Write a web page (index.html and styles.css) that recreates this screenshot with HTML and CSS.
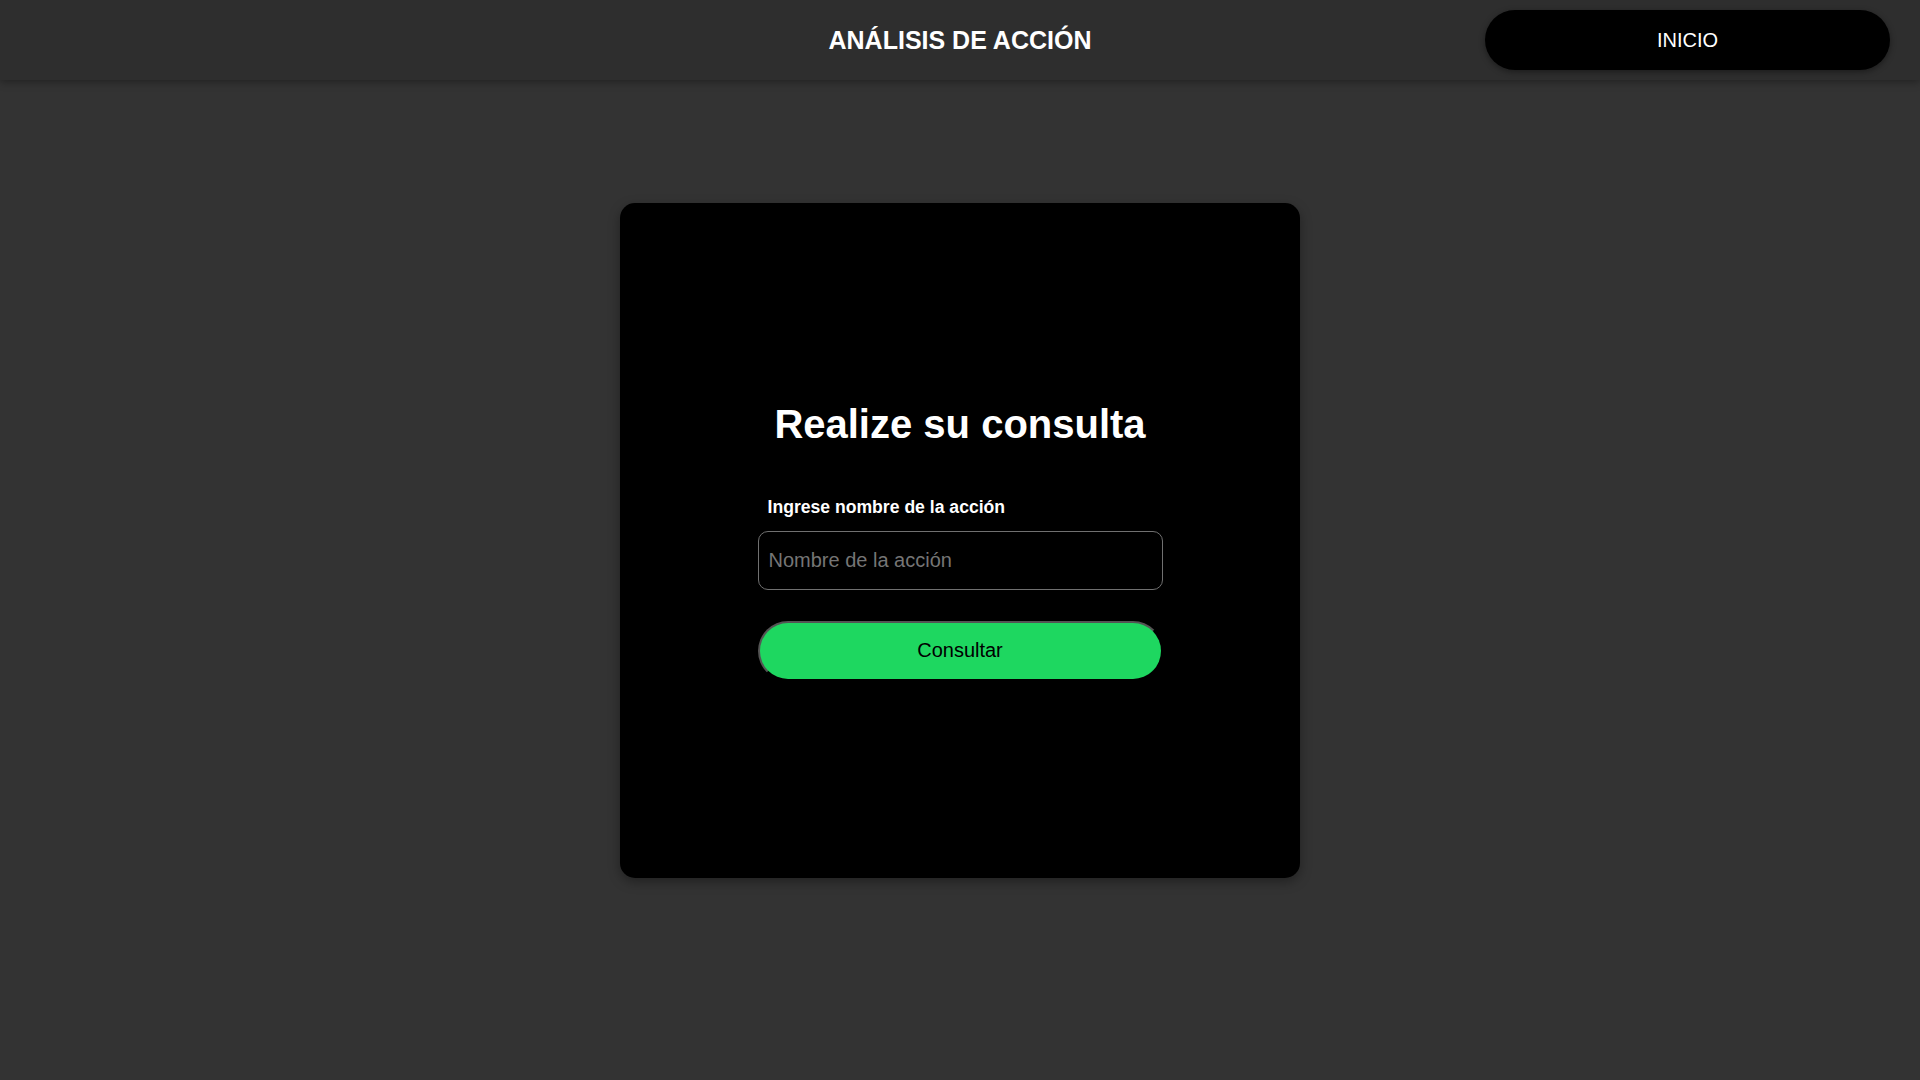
FILE: index.html
```html
<!DOCTYPE html>
<html lang="es">
<head>
<meta charset="utf-8">
<title>Análisis de Acción</title>
<link rel="stylesheet" href="styles.css">
</head>
<body>
<header class="topbar">
  <div class="topbar-spacer"></div>
  <h1 class="topbar-title">ANÁLISIS DE ACCIÓN</h1>
  <div class="topbar-actions">
    <button class="btn-home" type="button">INICIO</button>
  </div>
</header>
<main class="main">
  <section class="card">
    <h2 class="card-title">Realize su consulta</h2>
    <form class="query-form">
      <label class="query-label" for="accion">Ingrese nombre de la acción</label>
      <input class="query-input" id="accion" type="text" placeholder="Nombre de la acción">
      <button class="btn-submit" type="button">Consultar</button>
    </form>
  </section>
</main>
</body>
</html>
```
FILE: styles.css
```css
* { box-sizing: border-box; }
html, body { margin: 0; padding: 0; }
body {
  background: #333333;
  font-family: "Liberation Sans", Arial, sans-serif;
  color: #ffffff;
  min-height: 1080px;
}
.topbar {
  height: 80px;
  background: #2e2e2e;
  display: grid;
  grid-template-columns: 1fr auto 1fr;
  align-items: center;
  padding: 0 30px 0 30px;
  box-shadow: 0 2px 8px rgba(0,0,0,0.35);
  position: relative;
  z-index: 1;
}
.topbar-title {
  margin: 0;
  font-size: 25px;
  font-weight: bold;
  color: #ffffff;
  text-align: center;
}
.topbar-actions {
  display: flex;
  justify-content: flex-end;
}
.btn-home {
  width: 405px;
  height: 60px;
  border: none;
  border-radius: 30px;
  background: #000000;
  color: #ffffff;
  font-family: "Liberation Sans", Arial, sans-serif;
  font-size: 20px;
  box-shadow: 0 2px 6px rgba(0,0,0,0.4);
}
.main {
  display: flex;
  justify-content: center;
  padding-top: 123px;
}
.card {
  width: 680px;
  height: 675px;
  background: #000000;
  border-radius: 15px;
  box-shadow: 0 4px 12px rgba(0,0,0,0.35);
  display: flex;
  flex-direction: column;
  align-items: center;
  justify-content: center;
}
.card-title {
  margin: 0 0 50px 0;
  font-size: 40px;
  font-weight: bold;
  color: #ffffff;
  line-height: 46px;
}
.query-form {
  width: 405px;
  display: flex;
  flex-direction: column;
}
.query-label {
  font-size: 17.6px;
  font-weight: bold;
  padding-left: 10px;
  margin-bottom: 14px;
  line-height: 20px;
}
.query-input {
  height: 59px;
  width: 405px;
  background: #000000;
  border: 1px solid #707070;
  border-radius: 10px;
  padding: 0 10px;
  font-family: "Liberation Sans", Arial, sans-serif;
  font-size: 20px;
  color: #ffffff;
  outline: none;
}
.query-input::placeholder { color: #757575; }
.btn-submit {
  margin-top: 31px;
  height: 60px;
  width: 405px;
  background: #1ed760;
  border: 2px outset #000000;
  border-radius: 30px;
  font-family: "Liberation Sans", Arial, sans-serif;
  font-size: 20px;
  color: #000000;
}
```
